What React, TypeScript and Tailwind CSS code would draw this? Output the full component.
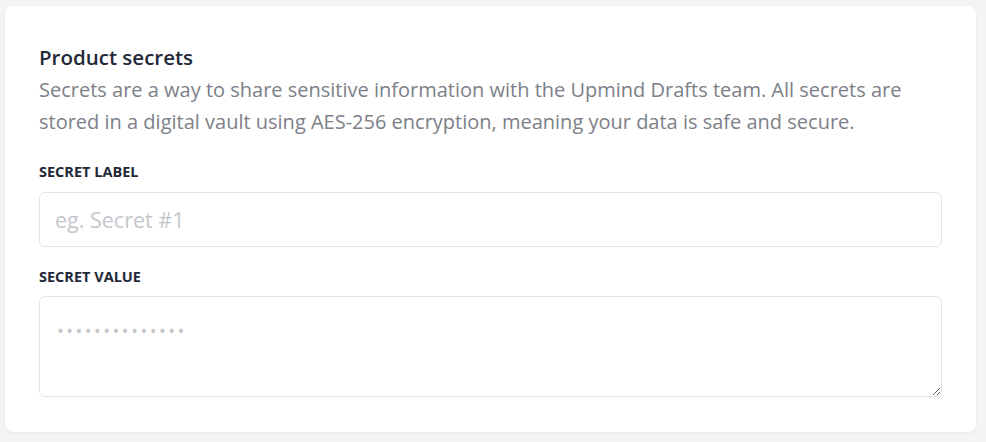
export default function App() {
  return (
    <div className="min-h-screen bg-[#f3f4f6] pl-[5px] pt-[6px] font-['Open_Sans','Noto_Sans',sans-serif]">
      <div className="w-[971px] rounded-lg bg-white px-[34px] pt-[37px] pb-[35px] shadow-[0_1px_3px_rgba(0,0,0,0.06)]">
        <h2 className="text-[20.5px] font-semibold leading-[28px] text-[#1f2937]">Product secrets</h2>
        <p className="mt-[3px] text-[20px] leading-[32px] text-[#7c8088]">
          Secrets are a way to share sensitive information with the Upmind Drafts team. All secrets are
          stored in a digital vault using AES-256 encryption, meaning your data is safe and secure.
        </p>
        <label className="mt-[24px] block text-[14.5px] font-bold uppercase leading-[20px] text-[#1f2937]">
          Secret label
        </label>
        <input
          className="mt-[10px] block h-[55px] w-full rounded-md border border-[#e2e4e8] px-[15px] text-[21.5px] text-[#374151] outline-none placeholder:text-[#c4c7cc]"
          placeholder="eg. Secret #1"
        />
        <label className="mt-[20px] block text-[14.5px] font-bold uppercase leading-[20px] text-[#1f2937]">
          Secret value
        </label>
        <textarea
          className="mt-[9px] block h-[101px] w-full rounded-md border border-[#e2e4e8] px-[17px] pt-[20px] text-[18px] leading-[28px] tracking-[2.5px] text-[#374151] outline-none placeholder:text-[#c4c7cc]"
          placeholder="••••••••••••••"
        />
      </div>
    </div>
  );
}
